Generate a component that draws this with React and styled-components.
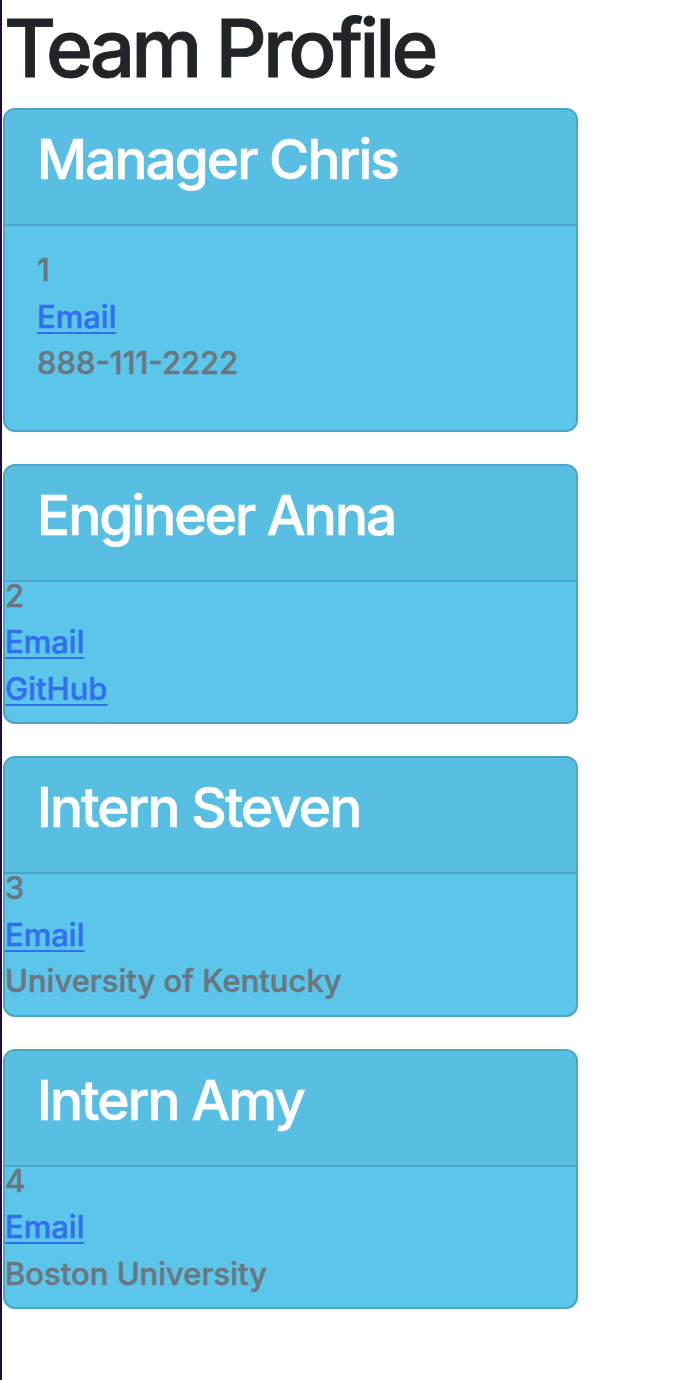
import React from 'react';
import styled, { createGlobalStyle } from 'styled-components';

const GlobalStyle = createGlobalStyle`
  html, body {
    margin: 0;
    padding: 0;
    background: #ffffff;
  }
  body {
    font-family: Inter, "Noto Sans", "Liberation Sans", sans-serif;
    color: #212529;
  }
`;

const Page = styled.div`
  min-height: 1380px;
  border-left: 2px solid #1c0c44;
  padding-left: 1px;
  box-sizing: border-box;
`;

const Title = styled.h1`
  margin: 0 0 12px;
  font-size: 80px;
  font-weight: 500;
  line-height: 96px;
  letter-spacing: -4px;
  color: #212529;
  padding-left: 1px;
  -webkit-text-stroke: 0.8px currentColor;
`;

const CardList = styled.div`
  display: flex;
  flex-direction: column;
  gap: 32px;
`;

const Card = styled.div`
  width: 575px;
  box-sizing: border-box;
  border: 2px solid #4aa5c6;
  border-radius: 12px;
  background: #5bc6ea;
  overflow: hidden;
`;

const CardHeader = styled.div`
  background: #58bfe3;
  border-bottom: 2px solid #4aa5c6;
  padding: 16px 32px 16px;
`;

const CardTitle = styled.h3`
  margin: 0 0 16px;
  font-size: 55px;
  font-weight: 500;
  line-height: 66px;
  color: #ffffff;
  letter-spacing: -2px;
  -webkit-text-stroke: 0.6px currentColor;
`;

const CardBody = styled.div`
  padding: ${p => (p.$padded ? '21px 32px 43px' : '0 0 10px')};
`;

const Lines = styled.div`
  margin-top: ${p => (p.$padded ? '0' : '-9px')};
  font-size: 31px;
  line-height: 46.5px;
  font-weight: 500;
  color: #6b7780;
  -webkit-text-stroke: 0.5px currentColor;
`;

const Line = styled.div``;

const LinkLine = styled.a`
  display: block;
  width: max-content;
  color: #3270ee;
  text-decoration: underline;
  text-decoration-thickness: 2px;
  text-underline-offset: 4px;
`;

const team = [
  { role: 'Manager', name: 'Chris', id: 1, extra: { text: '888-111-2222' }, padded: true },
  { role: 'Engineer', name: 'Anna', id: 2, extra: { link: 'GitHub' } },
  { role: 'Intern', name: 'Steven', id: 3, extra: { text: 'University of Kentucky' } },
  { role: 'Intern', name: 'Amy', id: 4, extra: { text: 'Boston University' } },
];

const MemberCard = ({ member }) => (
  <Card>
    <CardHeader>
      <CardTitle>{member.role} {member.name}</CardTitle>
    </CardHeader>
    <CardBody $padded={member.padded}>
      <Lines $padded={member.padded}>
        <Line>{member.id}</Line>
        <LinkLine href="#">Email</LinkLine>
        {member.extra.link ? (
          <LinkLine href="#">{member.extra.link}</LinkLine>
        ) : (
          <Line>{member.extra.text}</Line>
        )}
      </Lines>
    </CardBody>
  </Card>
);

export default function App() {
  return (
    <>
      <GlobalStyle />
      <Page>
        <Title>Team Profile</Title>
        <CardList>
          {team.map(m => (
            <MemberCard key={m.id} member={m} />
          ))}
        </CardList>
      </Page>
    </>
  );
}
